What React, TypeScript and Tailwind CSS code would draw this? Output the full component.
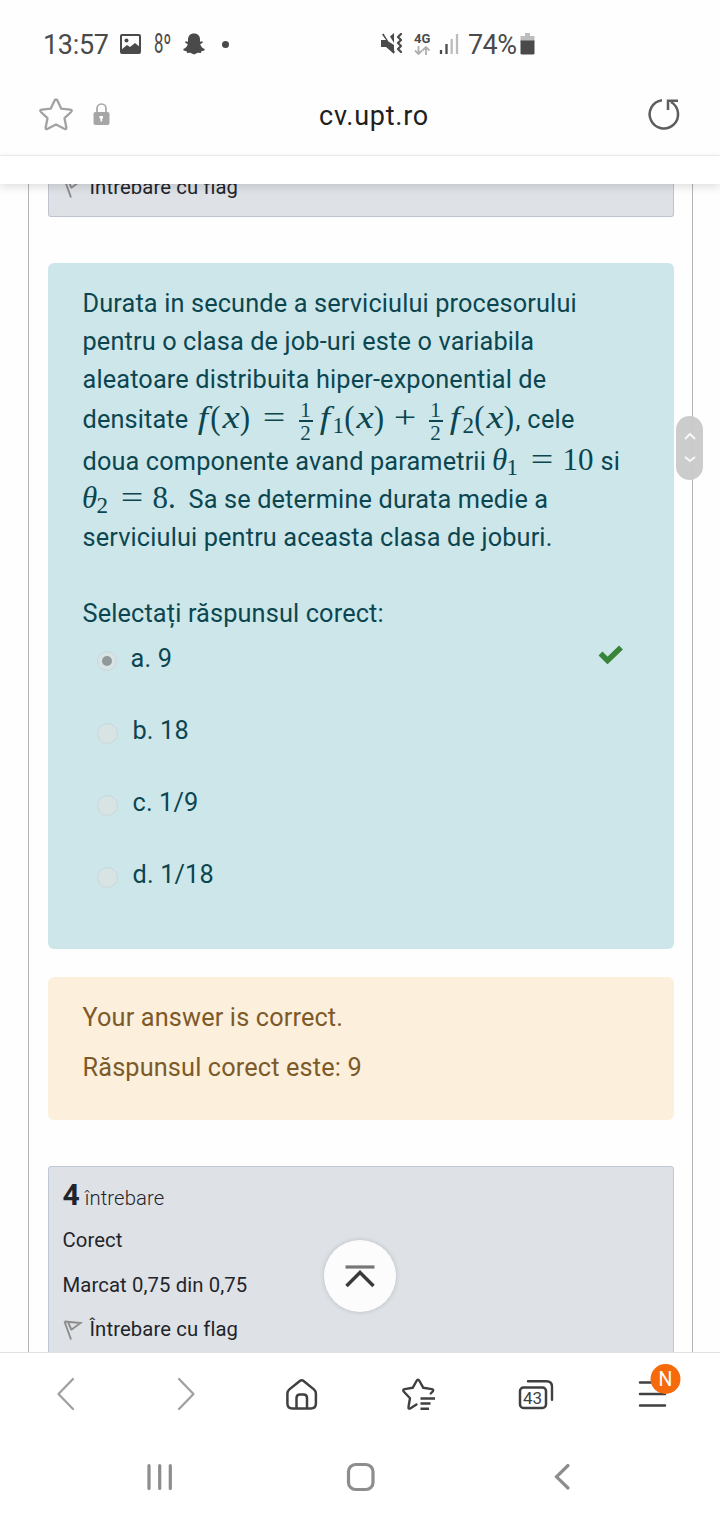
import type { ReactNode } from "react";

const stroke = { fill: "none", strokeLinecap: "round", strokeLinejoin: "round" } as const;

function StatusBar() {
  return (
    <header className="flex h-[84px] shrink-0 items-start pt-[30px] text-[#4a4a4a]">
      <span className="ml-[43px] w-[77px] text-[27px] leading-[30px] tracking-[-0.3px]">13:57</span>
      <svg className="mt-[4px] h-[20px] w-[21px]" viewBox="0 0 21 20">
        <rect x="1" y="1" width="19" height="18" rx="1" fill="none" stroke="#4a4a4a" strokeWidth="2" />
        <circle cx="6.5" cy="6.5" r="2" fill="#4a4a4a" />
        <path d="M1 19V16L7 11l3 2 5-4 5 4v6z" fill="#4a4a4a" />
      </svg>
      <span className="ml-[13px] w-[29px] origin-left scale-x-[0.62] text-[27px] leading-[29px]">8º</span>
      <svg className="mt-[3px] h-[22px] w-[22px]" viewBox="0 0 22 22">
        <path d="M11 0.5c4 0 6 2.7 6 6v2.2l2.3-.5.7 1.3-2.8 1.7c.8 2.4 2.1 3.800 4.500 4.800l-.3 1.400-3 .8-.5 1.700-3.200-.1-3.700 1.800-3.700-1.800-3.200.1-.5-1.700-3-.8-.3-1.400c2.400-1 3.700-2.400 4.500-4.800L2 9.500l.7-1.300L5 8.700V6.500c0-3.300 2-6 6-6z" fill="#4a4a4a" />
      </svg>
      <span className="mt-[11px] ml-[17px] h-[7px] w-[7px] rounded-full bg-[#4a4a4a]" />
      <svg className="mt-[3px] ml-[152px] h-[22px] w-[22px]" viewBox="0 0 22 22">
        <path d="M0 7h5L1 1.500 2.500 0.500 14 19l-1.500 1.500L5 14H0zM5 7l8 5v9L5 14zM9 3.500 13 0v10z" fill="#4a4a4a" />
        <path d="M20 1l-3 3 3 3-3 3 3 3-3 3 3 3" {...stroke} stroke="#4a4a4a" strokeWidth="2.200" />
      </svg>
      <div className="ml-[11px] w-[18px]">
        <div className="mt-[2px] text-[13px] leading-[14px] font-bold">4G</div>
        <svg className="h-[9px] w-[16px]" viewBox="0 0 16 9">
          <path d="M4.500 0v8M1 4.500 4.500 8 8 4.500M12 9V1M8.500 4.500 12 1l3.500 3.500" fill="none" stroke="#b0b0b0" strokeWidth="1.800" />
        </svg>
      </div>
      <svg className="mt-[4px] ml-[7px] h-[20px] w-[20px]" viewBox="0 0 20 20">
        <path d="M2 20v-4M7.500 20V10" stroke="#4a4a4a" strokeWidth="2.300" />
        <path d="M12.700 20V5M18 20V0" stroke="#bcbcbc" strokeWidth="2.300" />
      </svg>
      <span className="ml-[9px] w-[52px] text-[27px] leading-[30px] tracking-[-0.600px]">74%</span>
      <svg className="mt-[3px] h-[22px] w-[15px]" viewBox="0 0 15 22">
        <path d="M5 0h5v3h4.500v6H.5V3H5z" fill="#bdbdbd" />
        <path d="M.5 7.500h14v13l-1 1h-12l-1-1z" fill="#4a4a4a" />
      </svg>
    </header>
  );
}

function AddressBar() {
  return (
    <>
      <div className="flex h-[72px] shrink-0 items-start border-b border-[#efefef]">
        <svg className="mt-[12px] ml-[37px] h-[38px] w-[38px]" viewBox="37 96 38 38">
          <path d="M56 99.500q1 0 1.400 1l3.800 8.100 9 1.100q2.600.5.900 2.300l-6.600 6.200 1.800 9.100q.3 2.700-2 1.500L56 124.400l-8.300 4.400q-2.300 1.200-2-1.500l1.800-9.100-6.600-6.200q-1.700-1.800.9-2.300l9-1.100 3.800-8.100q.4-1 1.400-1z" {...stroke} stroke="#a2a2a2" strokeWidth="2.300" />
        </svg>
        <svg className="mt-[18px] ml-[18px] h-[24px] w-[18px]" viewBox="93 102 18 24">
          <path d="M97 113v-4.500a4.500 4.500 0 0 1 9 0v4.500" fill="none" stroke="#a6a6a6" strokeWidth="1.700" />
          <rect x="93.500" y="112" width="16" height="13" rx="2" fill="#a6a6a6" />
          <path d="M99.500 116h3.500v2.500h-.8v3h-1.700v-3h-1z" fill="#fff" />
        </svg>
        <span className="mt-[14px] ml-[208px] w-[320px] text-[27px] leading-[36px] tracking-[0.750px] text-[#202020]">cv.upt.ro</span>
        <svg className="mt-[12px] ml-[6px] h-[36px] w-[36px]" viewBox="645 96 36 36">
          <path d="M662 100.200A14.200 14.200 0 1 0 671 102M668 110v-9.300h10" fill="none" stroke="#5d5d5d" strokeWidth="2.500" />
        </svg>
      </div>
      <div className="relative z-10 h-[28px] shrink-0 bg-white shadow-[0_3px_10px_rgba(0,0,0,0.13)]" />
    </>
  );
}

function FlagRow() {
  return (
    <div className="flex h-[30px] items-center text-[20.300px] leading-[30px] tracking-[0.100px] text-[#1f252b]">
      <svg className="mr-[7px] h-[22px] w-[20px] shrink-0" viewBox="62 1319 20 22">
        <path d="M63.500 1322.500 70 1340.500M67 1323l3.500 8M63.500 1322.500l16 1.500-9.500 7" fill="none" stroke="#8c8c8c" strokeWidth="1.900" />
      </svg>
      Întrebare cu flag
    </div>
  );
}

function Glyph({ className, children }: { className: string; children: ReactNode }) {
  return <span className={`inline-flex shrink-0 justify-center leading-[38px] ${className}`}>{children}</span>;
}

const mathFont = "font-['Liberation_Serif',serif] tracking-normal";

function Fraction() {
  return (
    <span className={`mt-[4px] inline-flex w-[14px] shrink-0 flex-col items-center self-start text-[21px] leading-[17px] ${mathFont}`}>
      <span>1</span>
      <span className="mt-[1px] h-[1.500px] w-full bg-[#0b4650]" />
      <span className="mt-[3px]">2</span>
    </span>
  );
}

function Operator({ plus = false }: { plus?: boolean }) {
  return (
    <Glyph className={`w-[22px] origin-center scale-x-[1.250] text-[32px] ${mathFont}`}>{plus ? "+" : "="}</Glyph>
  );
}

function FunctionOf({ index }: { index?: string }) {
  return (
    <span className={`flex shrink-0 items-baseline text-[31px] ${mathFont}`}>
      <Glyph className="w-[16px] scale-x-[1.200] italic">f</Glyph>
      {index && <span className="relative top-[5px] w-[12px] text-[23px] leading-[20px]">{index}</span>}
      <Glyph className="w-[10px] scale-y-[1.120]">(</Glyph>
      <Glyph className="w-[20px] scale-x-[1.250] italic">x</Glyph>
      <Glyph className="w-[9px] scale-y-[1.120]">)</Glyph>
    </span>
  );
}

function Theta({ index }: { index: string }) {
  return (
    <span className={`flex shrink-0 items-baseline text-[31px] ${mathFont}`}>
      <Glyph className="w-[14px] italic">θ</Glyph>
      <span className="relative top-[5px] w-[12px] text-[23px] leading-[20px]">{index}</span>
    </span>
  );
}

function Option({ label, checked = false }: { label: string; checked?: boolean }) {
  return (
    <div className="flex h-[72px] items-start">
      <span className={`mt-[11px] ml-[14px] flex shrink-0 items-center justify-center rounded-full border border-[#c8d8da] bg-[#d8e3e4] ${checked ? "h-[20px] w-[20px]" : "h-[21px] w-[21px]"}`}>
        {checked && <span className="h-[10px] w-[10px] rounded-full bg-[#92999b]" />}
      </span>
      <span className={checked ? "ml-[14px]" : "ml-[15px]"}>{label}</span>
      {checked && (
        <svg className="mt-[3px] mr-[50px] ml-auto h-[21px] w-[26px]" viewBox="598 643 26 21">
          <path d="M600.500 653.500l7 7 13.500-13" fill="none" stroke="#398439" strokeWidth="5.500" />
        </svg>
      )}
    </div>
  );
}

function QuestionCard() {
  return (
    <section className="mt-[46px] h-[686px] shrink-0 rounded-[6px] bg-[#cde6ea] pt-[22px] pl-[34.500px] text-[25.300px] leading-[38px] tracking-[0.140px] whitespace-nowrap text-[#0b4650]">
      <p>Durata in secunde a serviciului procesorului</p>
      <p>pentru o clasa de job-uri este o variabila</p>
      <p className="h-[37px]">aleatoare distribuita hiper-exponential de</p>
      <div className="flex h-[42px] items-baseline">
        <span className="w-[112px] shrink-0">densitate</span>
        <FunctionOf />
        <span className="ml-[13px] flex"><Operator /></span>
        <span className="ml-[14px] flex self-stretch"><Fraction /></span>
        <span className="ml-[4px]"><FunctionOf index="1" /></span>
        <span className="ml-[10px] flex"><Operator plus /></span>
        <span className="ml-[13px] flex self-stretch"><Fraction /></span>
        <span className="ml-[4px]"><FunctionOf index="2" /></span>
        <span className="ml-[2px] tracking-[0.300px]">, cele</span>
      </div>
      <div className="flex h-[38px] items-baseline">
        <span className="w-[410px] shrink-0">doua componente avand parametrii</span>
        <Theta index="1" />
        <span className="ml-[12px] flex"><Operator /></span>
        <span className={`ml-[10px] w-[38px] text-[31px] ${mathFont}`}>10</span>
        <span>si</span>
      </div>
      <div className="flex h-[40.500px] items-baseline">
        <Theta index="2" />
        <span className="ml-[12px] flex"><Operator /></span>
        <span className={`ml-[10px] w-[36px] text-[31px] ${mathFont}`}>8.</span>
        <span>Sa se determine durata medie a</span>
      </div>
      <p>serviciului pentru aceasta clasa de joburi.</p>
      <p className="mt-[38px]">Selectați răspunsul corect:</p>
      <div className="mt-[7px]">
        <Option label="a. 9" checked />
        <Option label="b. 18" />
        <Option label="c. 1/9" />
        <Option label="d. 1/18" />
      </div>
    </section>
  );
}

function BottomBar() {
  return (
    <nav className="relative z-10 flex h-[84px] shrink-0 border-t border-[#e2e2e4] bg-white">
      <svg className="h-[83px] w-[120px]" viewBox="0 1353 120 83">
        <path d="M73 1379 58.500 1394 73 1409" {...stroke} stroke="#a0a0a0" strokeWidth="2.300" />
      </svg>
      <svg className="h-[83px] w-[120px]" viewBox="120 1353 120 83">
        <path d="M179 1379 193.500 1394 179 1409" {...stroke} stroke="#a0a0a0" strokeWidth="2.300" />
      </svg>
      <svg className="h-[83px] w-[120px]" viewBox="240 1353 120 83">
        <path d="M299.500 1381.200q2.200-1.800 4.400 0l10 8.200q2 1.800 2 4v10q0 5-5 5h-18.500q-5 0-5-5v-10q0-2.200 2-4zM296.500 1408v-10q0-3.500 3.500-3.500h3.500q3.500 0 3.500 3.500v10" {...stroke} stroke="#404040" strokeWidth="2.500" />
      </svg>
      <svg className="h-[83px] w-[120px]" viewBox="360 1353 120 83">
        <path d="M416.500 1404.500l-6 3.800q-2.500 1-2-1.500l1.500-8.500-6.300-6.800q-1.300-2 1-2.400l8-1.300 3.800-6.800q1.500-2.500 3 0l3.800 6.800 8.500 1.300q2.200.5.900 2.400l-2 2" {...stroke} stroke="#404040" strokeWidth="2.400" />
        <path d="M420.500 1398.500h14.500M420.500 1403.500h10M420.500 1408.800h8.500" stroke="#404040" strokeWidth="2.500" />
      </svg>
      <svg className="h-[83px] w-[120px]" viewBox="480 1353 120 83">
        <path d="M528 1381.200h18.500q5.500 0 5.500 5.500v13" {...stroke} stroke="#404040" strokeWidth="2.400" />
        <rect x="520" y="1387.500" width="26" height="20.500" rx="3.500" fill="none" stroke="#404040" strokeWidth="2.500" />
        <text x="532.500" y="1404" textAnchor="middle" fontSize="17" fill="#404040">43</text>
      </svg>
      <svg className="h-[83px] w-[120px]" viewBox="600 1353 120 83">
        <path d="M640 1382.500h24M640 1394h25M640 1405.500h25" {...stroke} stroke="#404040" strokeWidth="2.500" />
        <circle cx="665.500" cy="1379" r="15" fill="#f56a0a" />
        <text x="665.500" y="1386" textAnchor="middle" fontSize="19.500" fill="#fff">N</text>
      </svg>
    </nav>
  );
}

function SystemNav() {
  return (
    <nav className="flex h-[84px] shrink-0 justify-center bg-white">
      <svg className="h-[84px] w-[200px]" viewBox="60 1436 200 84">
        <path d="M149 1465.500v23M159.700 1465.500v23M170.300 1465.500v23" {...stroke} stroke="#8d8d8d" strokeWidth="3.200" />
      </svg>
      <svg className="h-[84px] w-[200px]" viewBox="260 1436 200 84">
        <rect x="348.500" y="1464.500" width="24.500" height="25" rx="7" fill="none" stroke="#8d8d8d" strokeWidth="3.200" />
      </svg>
      <svg className="h-[84px] w-[200px]" viewBox="460 1436 200 84">
        <path d="M568 1465.500 556.500 1476.800 568 1488" fill="none" stroke="#8d8d8d" strokeWidth="3.200" strokeLinecap="round" />
      </svg>
    </nav>
  );
}

export default function App() {
  return (
    <div className="relative flex h-[1520px] w-[720px] flex-col overflow-hidden bg-[#fefefe] font-['Roboto',sans-serif]">
      <StatusBar />
      <AddressBar />
      <main className="ml-[28px] flex h-[1168px] w-[665px] shrink-0 flex-col overflow-hidden border-x border-[#b4b4b4] pr-[18px] pl-[19px]">
        <div className="flex h-[33px] shrink-0 flex-col justify-end overflow-hidden rounded-b-[3px] border border-t-0 border-[#bec4cf] bg-[#dee1e6] pb-[14px] pl-[13.500px]">
          <FlagRow />
        </div>
        <QuestionCard />
        <section className="mt-[28px] h-[143px] shrink-0 rounded-[6px] bg-[#fcefdc] pt-[21.500px] pl-[34.500px] text-[25.300px] leading-[38px] tracking-[0.140px] text-[#7d5a29]">
          <p>Your answer is correct.</p>
          <p className="mt-[12px]">Răspunsul corect este: 9</p>
        </section>
        <section className="mt-[46px] h-[240px] shrink-0 rounded-[3px] border border-[#bec8d4] bg-[#dee1e6] pt-[10px] pl-[13.500px] text-[20.300px] leading-[30px] tracking-[0.100px] text-[#1f252b]">
          <h3 className="h-[36px] leading-[36px]">
            <span className="text-[30px] font-bold">4</span>
            <span className="ml-[5px] font-light">întrebare</span>
          </h3>
          <p className="mt-[12px]">Corect</p>
          <p className="mt-[15px]">Marcat 0,75 din 0,75</p>
          <div className="mt-[14px]"><FlagRow /></div>
        </section>
      </main>
      <BottomBar />
      <SystemNav />
      <div className="absolute top-[416px] left-[676px] z-20 flex h-[64px] w-[27px] flex-col items-center justify-center rounded-full bg-[#c9c9c9]/95">
        <svg className="h-[32px] w-[14px]" viewBox="0 0 14 32">
          <path d="M2 7l5-5 5 5M2 25l5 4 5-4" fill="none" stroke="#f7f7f7" strokeWidth="2" />
        </svg>
      </div>
      <button className="absolute top-[1240px] left-[324px] z-20 flex h-[72px] w-[72px] items-center justify-center rounded-full bg-[#fcfcfc] shadow-[0_0_5px_rgba(0,0,0,0.160)]">
        <svg className="h-[24px] w-[32px]" viewBox="344 1264 32 24">
          <path d="M345.500 1267h29" stroke="#777" strokeWidth="3.200" />
          <path d="M346.500 1286 360 1272.500 373.500 1286" fill="none" stroke="#3a3a3a" strokeWidth="3.500" />
        </svg>
      </button>
    </div>
  );
}
